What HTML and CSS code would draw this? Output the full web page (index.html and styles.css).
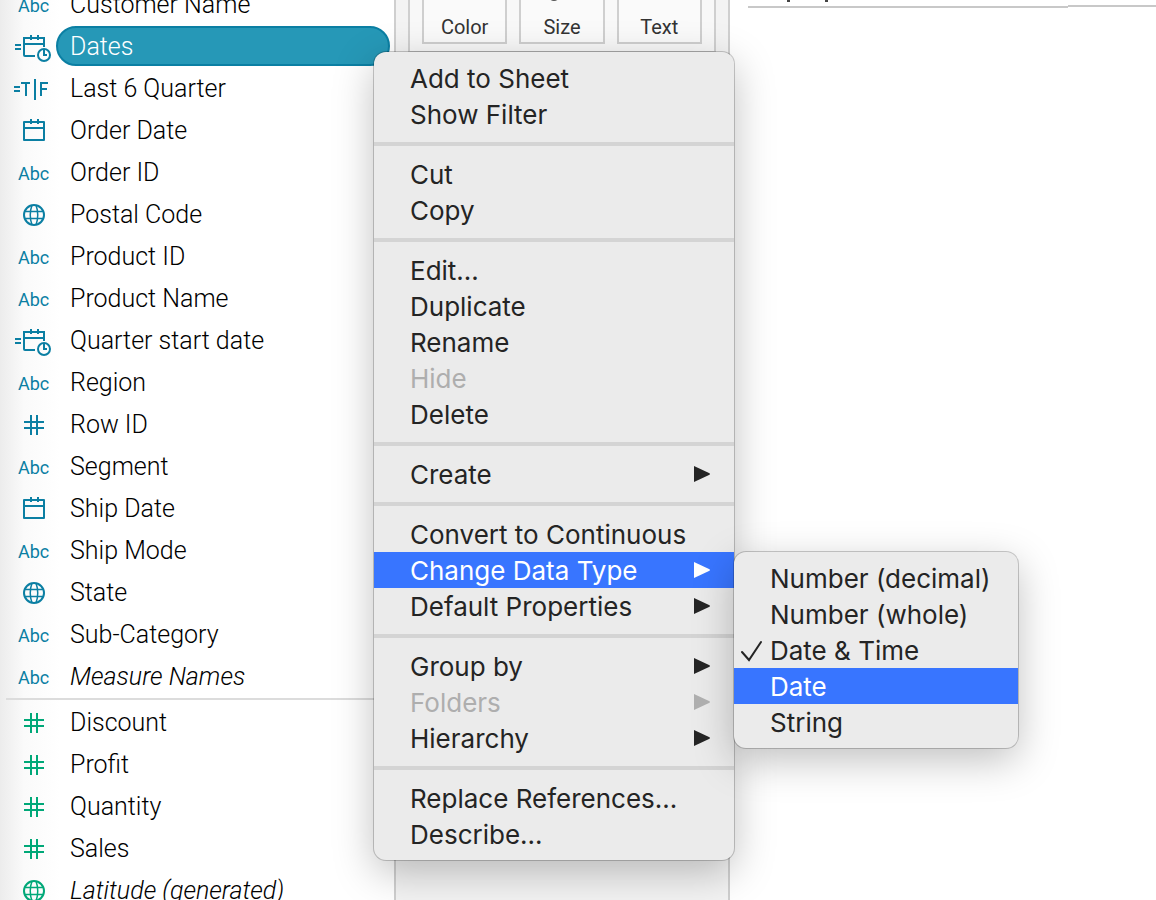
FILE: index.html
```html
<!DOCTYPE html>
<html lang="en">
<head>
<meta charset="utf-8">
<title>Sheet</title>
<link rel="stylesheet" href="styles.css">
</head>
<body>
<svg class="defs" aria-hidden="true">
  <symbol id="calendar" viewBox="0 0 42 42"><path stroke-linejoin="round" d="M12 13h20v18H12z"/><path d="M12 19h20M19 10v5M26 10v5"/></symbol>
  <symbol id="calc-datetime" viewBox="0 0 42 42"><path d="M3 20h6M3 24h6M32 22v-9H12v17q0 1 1 1h10M12 19h20M19 10v5M26 10v5M32 25v5h3"/><circle cx="32" cy="30" r="6"/></symbol>
  <symbol id="calc-bool" viewBox="0 0 42 42"><path d="M2 20h6M2 24h6M9 16h9M14 16v13M23 12v21M29 29V16h7M29 22h6"/></symbol>
  <symbol id="hash" viewBox="0 0 42 42"><path d="M12 19h20M12 25h20M19 12v20M25 12v20"/></symbol>
  <symbol id="globe" viewBox="0 0 42 42"><circle cx="22" cy="22" r="10"/><path stroke-width="1.500" d="M12.500 18.500h19M12.500 25.500h19M20 12q-3.500 10 0 20M24 12q3.500 10 0 20"/></symbol>
  <symbol id="arrow" viewBox="0 0 16 16"><path d="M0 0L15 7Q17 8 15 9L0 16z"/></symbol>
</svg>
<div class="app">
  <aside class="fields">
    <ul class="field-list">
      <li><button class="field"><span class="abc">Abc</span><span class="name">Customer Name</span></button></li>
      <li><button class="field selected"><svg class="icon"><use href="#calc-datetime"/></svg><span class="name">Dates</span></button></li>
      <li><button class="field"><svg class="icon"><use href="#calc-bool"/></svg><span class="name">Last 6 Quarter</span></button></li>
      <li><button class="field"><svg class="icon"><use href="#calendar"/></svg><span class="name">Order Date</span></button></li>
      <li><button class="field"><span class="abc">Abc</span><span class="name">Order ID</span></button></li>
      <li><button class="field"><svg class="icon"><use href="#globe"/></svg><span class="name">Postal Code</span></button></li>
      <li><button class="field"><span class="abc">Abc</span><span class="name">Product ID</span></button></li>
      <li><button class="field"><span class="abc">Abc</span><span class="name">Product Name</span></button></li>
      <li><button class="field"><svg class="icon"><use href="#calc-datetime"/></svg><span class="name">Quarter start date</span></button></li>
      <li><button class="field"><span class="abc">Abc</span><span class="name">Region</span></button></li>
      <li><button class="field"><svg class="icon"><use href="#hash"/></svg><span class="name">Row ID</span></button></li>
      <li><button class="field"><span class="abc">Abc</span><span class="name">Segment</span></button></li>
      <li><button class="field"><svg class="icon"><use href="#calendar"/></svg><span class="name">Ship Date</span></button></li>
      <li><button class="field"><span class="abc">Abc</span><span class="name">Ship Mode</span></button></li>
      <li><button class="field"><svg class="icon"><use href="#globe"/></svg><span class="name">State</span></button></li>
      <li><button class="field"><span class="abc">Abc</span><span class="name">Sub-Category</span></button></li>
      <li><button class="field generated"><span class="abc">Abc</span><span class="name">Measure Names</span></button></li>
    </ul>
    <ul class="field-list measures">
      <li><button class="field"><svg class="icon"><use href="#hash"/></svg><span class="name">Discount</span></button></li>
      <li><button class="field"><svg class="icon"><use href="#hash"/></svg><span class="name">Profit</span></button></li>
      <li><button class="field"><svg class="icon"><use href="#hash"/></svg><span class="name">Quantity</span></button></li>
      <li><button class="field"><svg class="icon"><use href="#hash"/></svg><span class="name">Sales</span></button></li>
      <li><button class="field generated"><svg class="icon"><use href="#globe"/></svg><span class="name">Latitude (generated)</span></button></li>
    </ul>
  </aside>
  <section class="shelves">
    <div class="marks">
      <button class="mark">Color</button>
      <button class="mark"><svg class="size-icon" viewBox="0 0 16 8"><circle cx="7" cy="-5" r="5"/></svg>Size</button>
      <button class="mark">Text</button>
    </div>
  </section>
  <main class="sheet">
    <div class="sheet-title"><svg class="title-edge" viewBox="0 0 60 2"><path d="M39 0h3v2h-3zM77 0h3v2h-3z"/></svg></div>
    <div class="sheet-head"></div>
  </main>
</div>
<div class="menu context-menu" role="menu">
  <div class="group">
    <button class="item">Add to Sheet</button>
    <button class="item">Show Filter</button>
  </div>
  <div class="group">
    <button class="item">Cut</button>
    <button class="item">Copy</button>
  </div>
  <div class="group">
    <button class="item">Edit...</button>
    <button class="item">Duplicate</button>
    <button class="item">Rename</button>
    <button class="item" disabled>Hide</button>
    <button class="item">Delete</button>
  </div>
  <div class="group">
    <button class="item">Create<svg class="arrow"><use href="#arrow"/></svg></button>
  </div>
  <div class="group">
    <button class="item">Convert to Continuous</button>
    <div class="branch">
      <button class="item active">Change Data Type<svg class="arrow"><use href="#arrow"/></svg></button>
      <div class="menu submenu" role="menu">
        <button class="item">Number (decimal)</button>
        <button class="item">Number (whole)</button>
        <button class="item checked"><svg class="check" viewBox="0 0 22 22"><path d="M1 12l7 8L20 2"/></svg>Date &amp; Time</button>
        <button class="item active">Date</button>
        <button class="item">String</button>
      </div>
    </div>
    <button class="item">Default Properties<svg class="arrow"><use href="#arrow"/></svg></button>
  </div>
  <div class="group">
    <button class="item">Group by<svg class="arrow"><use href="#arrow"/></svg></button>
    <button class="item" disabled>Folders<svg class="arrow"><use href="#arrow"/></svg></button>
    <button class="item">Hierarchy<svg class="arrow"><use href="#arrow"/></svg></button>
  </div>
  <div class="group">
    <button class="item">Replace References...</button>
    <button class="item">Describe...</button>
  </div>
</div>
</body>
</html>
```
FILE: styles.css
```css
* { box-sizing: border-box; }
body { margin: 0; background: #fff; color: #000; font-family: Roboto, sans-serif; overflow: hidden; }
button { border: 0; padding: 0; margin: 0; background: none; font: inherit; color: inherit; text-align: left; }
.defs { position: absolute; width: 0; height: 0; }
.app { display: flex; height: 100vh; overflow: hidden; }

.fields { flex: 0 0 394px; overflow: hidden; background: linear-gradient(90deg, #ececec, #fafafa 24px, #fff 60px); }
.field-list { list-style: none; margin: -17px 0 0; padding: 0; color: #0b7fa3; }
.measures { margin: 1px 0 0 6px; padding-top: 1px; border-top: 2px solid #dcdcdc; color: #00a878; }
.measures .field { margin-left: -6px; }
.field { display: flex; align-items: center; width: 100%; height: 42px; padding: 0 4px 0 12px; }
.icon { flex: none; width: 42px; height: 42px; fill: none; stroke: currentColor; stroke-width: 2; }
.abc { flex: none; width: 42px; padding: 4px 0 0 6px; font-size: 18px; line-height: 24px; }
.name { flex: 1; height: 40px; margin-left: 2px; padding-left: 14px; line-height: 42px; font-size: 25px; font-weight: 350; color: #000; white-space: nowrap; }
.selected .name { border: 2px solid #0b7fa3; padding-left: 12px; line-height: 38px; border-radius: 20px; background: #2698b7; color: #fff; }
.generated .name { font-style: italic; }

.shelves { flex: 0 0 336px; padding: 0 12px; background: #f3f3f3; border: solid #cfcfcf; border-width: 0 2px; }
.marks { display: flex; gap: 12px; height: 53px; padding: 0 12px 7px; background: #f8f8f8; border: 2px solid #cfcfcf; border-top: 0; }
.mark { position: relative; flex: 1; height: 44px; padding-top: 12px; border: 2px solid #cfcfcf; border-top: 0; background: #fafafa; color: #333; font: 20px/30px Roboto, sans-serif; text-align: center; }
.size-icon { position: absolute; top: 0; left: 26px; width: 16px; height: 8px; fill: none; stroke: #555; stroke-width: 2; }

.sheet { flex: 1; display: flex; align-items: flex-start; padding-left: 18px; }
.sheet-title { flex: 0 0 320px; height: 8px; border-bottom: 2px solid #c8c8c8; }
.title-edge { display: block; width: 60px; height: 2px; overflow: visible; fill: #444; }
.sheet-head { flex: 1; height: 7px; border-bottom: 2px solid #c8c8c8; }

.menu { position: absolute; padding: 8px 0; border-radius: 12px; background: #ebebeb; color: #242424; font: 26px/34px Inter, sans-serif; box-shadow: 0 0 0 1px rgba(0,0,0,.2), 0 12px 40px rgba(0,0,0,.25); }
.context-menu { left: 374px; top: 52px; width: 360px; }
.submenu { left: 100%; top: 0; width: 284px; }
.group + .group { margin-top: 10px; padding-top: 10px; border-top: 4px solid #d4d4d4; }
.branch { position: relative; }
.item { position: relative; display: flex; align-items: center; justify-content: space-between; width: 100%; height: 36px; padding: 2px 24px 0 36px; white-space: nowrap; }
.item.active { background: #3875ff; color: #fff; }
.item:disabled { color: #aeaeae; }
.arrow { width: 16px; height: 16px; margin-bottom: 2px; fill: currentColor; }
.check { position: absolute; left: 7px; top: 8px; width: 22px; height: 22px; fill: none; stroke: currentColor; stroke-width: 2; stroke-linecap: round; }
```
